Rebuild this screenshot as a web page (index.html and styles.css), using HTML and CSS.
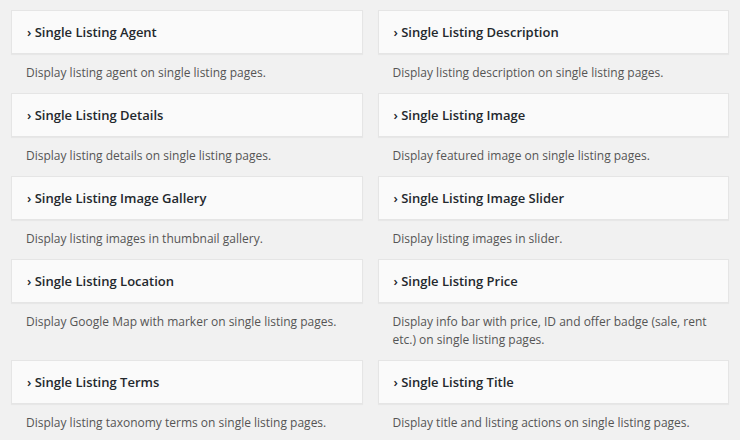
FILE: index.html
```html
<!DOCTYPE html>
<html lang="en">
<head>
<meta charset="utf-8">
<title>Available Widgets</title>
<link rel="stylesheet" href="styles.css">
</head>
<body>
<div class="widget-list">
  <div class="widget">
    <div class="widget-top"><h3 class="widget-title">› Single Listing Agent</h3></div>
    <div class="widget-description">Display listing agent on single listing pages.</div>
  </div>
  <div class="widget">
    <div class="widget-top"><h3 class="widget-title">› Single Listing Description</h3></div>
    <div class="widget-description">Display listing description on single listing pages.</div>
  </div>
  <div class="widget">
    <div class="widget-top"><h3 class="widget-title">› Single Listing Details</h3></div>
    <div class="widget-description">Display listing details on single listing pages.</div>
  </div>
  <div class="widget">
    <div class="widget-top"><h3 class="widget-title">› Single Listing Image</h3></div>
    <div class="widget-description">Display featured image on single listing pages.</div>
  </div>
  <div class="widget">
    <div class="widget-top"><h3 class="widget-title">› Single Listing Image Gallery</h3></div>
    <div class="widget-description">Display listing images in thumbnail gallery.</div>
  </div>
  <div class="widget">
    <div class="widget-top"><h3 class="widget-title">› Single Listing Image Slider</h3></div>
    <div class="widget-description">Display listing images in slider.</div>
  </div>
  <div class="widget">
    <div class="widget-top"><h3 class="widget-title">› Single Listing Location</h3></div>
    <div class="widget-description">Display Google Map with marker on single listing pages.</div>
  </div>
  <div class="widget">
    <div class="widget-top"><h3 class="widget-title">› Single Listing Price</h3></div>
    <div class="widget-description">Display info bar with price, ID and offer badge (sale, rent etc.) on single listing pages.</div>
  </div>
  <div class="widget">
    <div class="widget-top"><h3 class="widget-title">› Single Listing Terms</h3></div>
    <div class="widget-description">Display listing taxonomy terms on single listing pages.</div>
  </div>
  <div class="widget">
    <div class="widget-top"><h3 class="widget-title">› Single Listing Title</h3></div>
    <div class="widget-description">Display title and listing actions on single listing pages.</div>
  </div>
</div>
</body>
</html>
```
FILE: styles.css
```css
html, body {
  margin: 0;
  padding: 0;
  background: #f1f1f1;
}
body {
  font-family: "Open Sans", "Liberation Sans", sans-serif;
  font-size: 13px;
  line-height: 18px;
  color: #444;
}
.widget-list {
  display: grid;
  grid-template-columns: 1fr 1fr;
  column-gap: 15px;
  padding: 10px 11px 0 11px;
}
.widget {
  display: flex;
  flex-direction: column;
}
.widget-top {
  height: 42px;
  background: #fafafa;
  border: 1px solid #e5e5e5;
  box-shadow: 0 1px 1px rgba(0, 0, 0, 0.04);
  display: flex;
  align-items: center;
  padding: 0 15px;
}
.widget-title {
  margin: 0;
  font-size: 13px;
  font-weight: 600;
  color: #23282d;
  line-height: 18px;
}
.widget-description {
  padding: 10px 15px 11px 15px;
  font-size: 12px;
  color: #555;
}
```
